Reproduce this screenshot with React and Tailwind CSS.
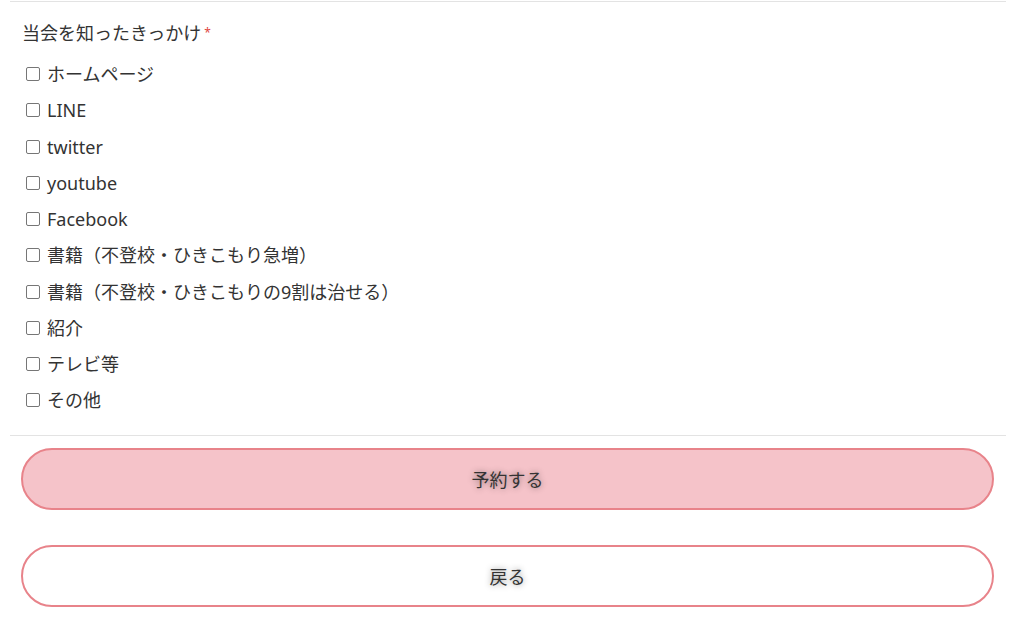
import React, { useState } from "react";

const options = [
  "ホームページ",
  "LINE",
  "twitter",
  "youtube",
  "Facebook",
  "書籍（不登校・ひきこもり急増）",
  "書籍（不登校・ひきこもりの9割は治せる）",
  "紹介",
  "テレビ等",
  "その他",
];

const App = () => {
  const [checked, setChecked] = useState([]);

  const toggle = (opt) => {
    setChecked((prev) =>
      prev.includes(opt) ? prev.filter((o) => o !== opt) : [...prev, opt]
    );
  };

  return (
    <div
      className="min-h-screen bg-white pl-[10px] pr-[18px] pt-[1px] text-[#333]"
      style={{ fontFamily: '"Noto Sans", "Noto Sans CJK JP", sans-serif' }}
    >
      {/* Question block */}
      <div className="border-t border-[#e3e3e3] px-[12px] pt-[13px] pb-[16px]">
        <p className="text-[18px] leading-[36px] flex items-center">
          当会を知ったきっかけ
          <span className="text-[#e0463f] text-[12px] ml-[3px]">*</span>
        </p>
        <ul className="mt-[5px]">
          {options.map((opt) => (
            <li key={opt} className="h-[36.25px] flex items-center">
              <label className="flex items-center cursor-pointer">
                <input
                  type="checkbox"
                  checked={checked.includes(opt)}
                  onChange={() => toggle(opt)}
                  className="appearance-none w-[14px] h-[14px] ml-[4px] mr-[7px] border border-[#767676] rounded-[2px] bg-white checked:bg-[#e8838a] checked:border-[#e8838a]"
                />
                <span className="text-[18px] leading-[36px]">{opt}</span>
              </label>
            </li>
          ))}
        </ul>
      </div>

      {/* Buttons */}
      <div className="border-t border-[#e3e3e3] pl-[11px] pr-[12px] pt-[12px] pb-[12px] flex flex-col gap-[35px]">
        <button
          type="submit"
          className="h-[62px] w-full rounded-full border-2 border-[#e8838a] bg-[#f5c3c9] pt-[4px] text-[18px] text-[#333] [text-shadow:0_0_6px_rgba(0,0,0,0.45)]"
        >
          予約する
        </button>
        <button
          type="button"
          className="h-[62px] w-full rounded-full border-2 border-[#e8838a] bg-white pt-[4px] text-[18px] text-[#333] [text-shadow:0_0_6px_rgba(0,0,0,0.45)]"
        >
          戻る
        </button>
      </div>
    </div>
  );
};

export default App;
